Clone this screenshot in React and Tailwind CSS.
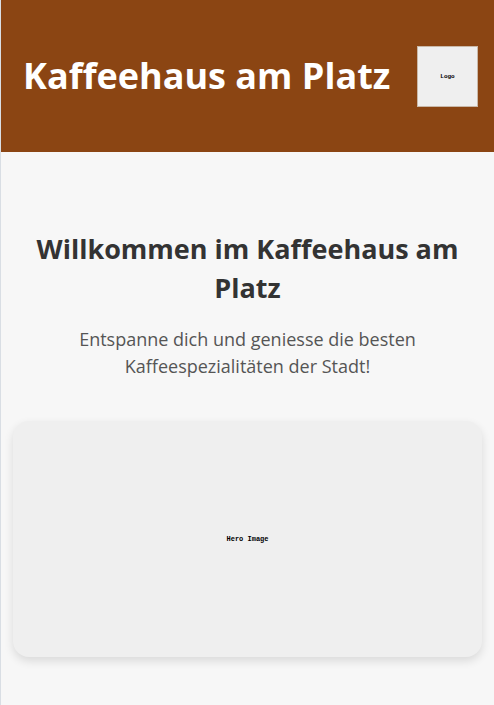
export default function App() {
  return (
    <div className="min-h-[705px] bg-[#f7f7f7] border-l border-[#d9dee4] font-['Open_Sans',sans-serif]">
      <header className="h-[152px] bg-[#8b4513] flex items-center justify-between pl-[22px] pr-[16px]">
        <h1 className="text-white font-bold text-[36px] leading-none">Kaffeehaus am Platz</h1>
        <div className="w-[61px] h-[61px] bg-[#efefef] border border-[#c9b8a8] flex items-center justify-center">
          <span className="font-['Liberation_Mono',monospace] font-bold text-[6px] text-black">Logo</span>
        </div>
      </header>

      <section className="pt-[77px] px-[12px] text-center">
        <h2 className="text-[27px] leading-[39px] font-bold text-[#333]">
          Willkommen im Kaffeehaus am Platz
        </h2>
        <p className="mt-[19px] text-[18px] leading-[27px] text-[#555] px-[50px]">
          Entspanne dich und geniesse die besten Kaffeespezialitäten der Stadt!
        </p>
      </section>

      <div className="px-[12px] pt-[41px] pb-[48px]">
        <div className="h-[236px] rounded-[16px] bg-[#efefef] shadow-[0_4px_10px_rgba(0,0,0,0.12)] flex items-center justify-center">
          <span className="font-['Liberation_Mono',monospace] font-bold text-[7px] text-black">Hero Image</span>
        </div>
      </div>
    </div>
  );
}
